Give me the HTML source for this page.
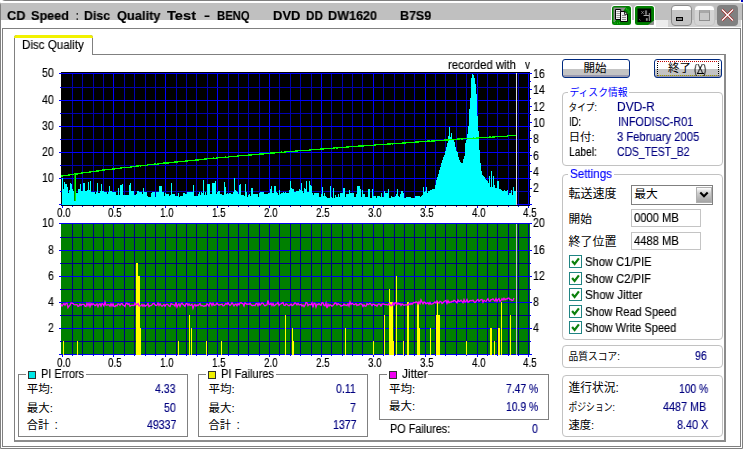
<!DOCTYPE html>
<html lang="ja"><head><meta charset="utf-8"><title>CD Speed : Disc Quality Test</title>
<style>
html,body{margin:0;padding:0;background:#fff;}
body{width:743px;height:449px;position:relative;overflow:hidden;font-family:"Liberation Sans",sans-serif;font-size:12px;color:#000;}
.a{position:absolute;display:block;}
.t{position:absolute;display:block;white-space:pre;transform-origin:0 0;will-change:transform;-webkit-text-stroke:0.15px currentColor;}
.gb{position:absolute;box-sizing:border-box;border:1px solid #c2c2c2;border-radius:4px;}
.sq{position:absolute;box-sizing:border-box;border:1px solid #808080;}
.cap{position:absolute;background:#fff;height:3px;}
.btn{position:absolute;box-sizing:border-box;border:1px solid #002a80;border-radius:3px;background:linear-gradient(#fff 0,#fff 55%,#c4c4c4 55%,#c4c4c4 88%,#9a9ab0 88%);}
.ed{position:absolute;box-sizing:border-box;border:1px solid #c4c4c4;background:#fff;}
.cb{position:absolute;box-sizing:border-box;width:13px;height:13px;border:1px solid #208484;background:#fff;}
.key{position:absolute;box-sizing:border-box;width:8px;height:8px;border:1px solid #303030;}
</style></head>
<body>
<div class="a" style="left:0;top:0;width:743px;height:449px;box-sizing:border-box;border:1px solid #808080;border-radius:5px 5px 0 0;"></div>
<div class="a" style="left:1px;top:3px;width:741px;height:17px;background:#c0c0c0;"></div>
<div class="a" style="left:1px;top:1px;width:741px;height:2px;background:#fff;"></div>
<div class="a" style="left:741px;top:0;width:2px;height:2px;background:#0000c0;"></div>
<div class="sq" style="left:2px;top:28px;width:739px;height:419px;"></div>
<div class="a" style="left:656px;top:20px;width:12px;height:7px;background:#ececec;"></div>
<div class="a" style="left:668px;top:20px;width:73px;height:7px;background:#d2d2d2;"></div>
<svg class="a" style="left:611px;top:5px" width="21" height="21" viewBox="0 0 21 21"><rect x="0" y="0" width="21" height="21" rx="3.5" fill="#fff"/><rect x="1" y="1" width="19" height="19" rx="2.5" fill="#008000"/><path d="M2.5 2.5H15L3.5 17H2.5z" fill="#8c8c8c"/><path d="M4.5 4.5h5.2v10H4.5z" fill="#f4f4f4" stroke="#000" stroke-width="1"/><path d="M5.5 6.5h3.5M5.5 8.5h3.5M5.5 10.5h3.5M5.5 12.5h3.5" stroke="#9a9a9a" stroke-width="1"/><path d="M9.5 6.5h4.4l2.6 2.6v7.4h-7z" fill="#ececec" stroke="#000" stroke-width="1"/><path d="M11 10.5h4M11 12.5h4M11 14.5h4" stroke="#8a8a8a" stroke-width="1"/><path d="M13.5 6.8v2.6h2.6" fill="none" stroke="#000" stroke-width="0.8"/><path d="M2.5 15.5h1M3.5 18h1M6 18.2h1M8 17.8h1M16.5 5h1M17.5 7h1M15 4h1" stroke="#20e020" stroke-width="1"/></svg>
<svg class="a" style="left:634px;top:5px" width="21" height="21" viewBox="0 0 21 21"><rect x="0" y="0" width="21" height="21" rx="3.5" fill="#fff"/><rect x="1" y="1" width="19" height="19" rx="2.5" fill="#008000"/><rect x="3.5" y="3.5" width="13.7" height="13.6" fill="#000"/><path d="M14 20L20 15.5V18.5Q20 20 18.5 20z" fill="#909090"/><path d="M7.4 6.2l2.2 2.6M9.6 6.2L7.4 8.8" stroke="#8a8a8a" stroke-width="0.9"/><path d="M11.4 5.4v4.4M12.6 5.4v4.4" stroke="#9c9c9c" stroke-width="0.8"/><path d="M9.6 10.5h5.6" stroke="#a8a8a8" stroke-width="1"/><path d="M15.3 8v8" stroke="#a0a0a0" stroke-width="1"/><rect x="11.9" y="13.2" width="1.8" height="2.6" fill="#8c8c8c"/><path d="M5 14.2l1.6 1.3" stroke="#707070" stroke-width="0.8"/></svg>
<div class="a" style="left:671px;top:5px;width:21px;height:21px;box-sizing:border-box;border:1px solid #8c8c8c;border-radius:4px;background:linear-gradient(#fff 0,#fff 22%,#c4c4c4 22%);"></div>
<div class="a" style="left:676px;top:17px;width:7px;height:4px;box-sizing:border-box;background:#808080;border:1px solid #000;"></div>
<div class="a" style="left:694px;top:5px;width:21px;height:21px;box-sizing:border-box;border:1px solid #c4c4c4;border-radius:4px;background:linear-gradient(#fff 0,#fff 22%,#d4d4d4 22%);"></div>
<div class="a" style="left:699px;top:10px;width:11px;height:11px;box-sizing:border-box;border:1px solid #909090;border-top:3px solid #a8a8a8;background:#c8c8c8;"></div>
<div class="a" style="left:717px;top:5px;width:21px;height:21px;border-radius:4px;background:#808080;"></div>
<svg class="a" style="left:717px;top:5px" width="21" height="21" viewBox="0 0 21 21"><path d="M5 4.5L16 15.5M16 4.5L5 15.5" stroke="#a02020" stroke-width="2.5"/><path d="M5 4.5L16 15.5M16 4.5L5 15.5" stroke="#fff" stroke-width="1.4"/></svg>
<div class="a" style="left:14px;top:54px;width:712px;height:388px;box-sizing:border-box;border:1px solid #808080;border-right:2px solid #8c8c8c;border-bottom:2px solid #8c8c8c;"></div>
<div class="a" style="left:14px;top:35px;width:79px;height:20px;box-sizing:border-box;border:1px solid #808080;border-bottom:none;border-radius:3px 3px 0 0;background:#fff;"></div>
<div class="a" style="left:14px;top:35px;width:79px;height:3px;border-radius:3px 3px 0 0;background:#f2f200;"></div>
<div class="btn" style="left:562px;top:59px;width:68px;height:19px;"></div>
<div class="btn" style="left:654px;top:59px;width:68px;height:19px;"></div>
<div class="a" style="left:657px;top:61px;width:62px;height:15px;box-sizing:border-box;border:1px dotted #000;border-top-color:#c00000;border-bottom-color:#a0a000;"></div>
<div class="a" style="left:697px;top:73px;width:7px;height:1px;background:#000;"></div>
<div class="gb" style="left:562px;top:92px;width:161px;height:74px;"></div><div class="cap" style="left:568px;top:91px;width:61px;"></div>
<div class="gb" style="left:562px;top:174px;width:161px;height:166px;"></div><div class="cap" style="left:568px;top:173px;width:46px;"></div>
<div class="gb" style="left:562px;top:345px;width:161px;height:23px;"></div>
<div class="gb" style="left:562px;top:375px;width:161px;height:62px;"></div>
<div class="a" style="left:631px;top:185px;width:82px;height:20px;box-sizing:border-box;border:1px solid #808080;background:#fff;"></div>
<div class="a" style="left:696px;top:187px;width:16px;height:16px;box-sizing:border-box;background:linear-gradient(#fff,#cfcfcf 35%,#a4a4a4);border:1px solid #b0b0b0;"></div>
<svg class="a" style="left:696px;top:187px" width="16" height="16" viewBox="0 0 16 16"><path d="M4.3 5.6l3.7 3.7 3.7-3.7" fill="none" stroke="#000" stroke-width="2.1"/></svg>
<div class="ed" style="left:631px;top:209px;width:70px;height:18px;"></div>
<div class="ed" style="left:631px;top:232px;width:70px;height:18px;"></div>
<div class="cb" style="left:569px;top:255px;"></div>
<svg class="a" style="left:569px;top:255px" width="13" height="13" viewBox="0 0 13 13"><path d="M3.1 6L5.6 8.9L9.9 3.3" fill="none" stroke="#0c800c" stroke-width="2.2"/></svg>
<div class="cb" style="left:569px;top:272px;"></div>
<svg class="a" style="left:569px;top:272px" width="13" height="13" viewBox="0 0 13 13"><path d="M3.1 6L5.6 8.9L9.9 3.3" fill="none" stroke="#0c800c" stroke-width="2.2"/></svg>
<div class="cb" style="left:569px;top:288px;"></div>
<svg class="a" style="left:569px;top:288px" width="13" height="13" viewBox="0 0 13 13"><path d="M3.1 6L5.6 8.9L9.9 3.3" fill="none" stroke="#0c800c" stroke-width="2.2"/></svg>
<div class="cb" style="left:569px;top:305px;"></div>
<svg class="a" style="left:569px;top:305px" width="13" height="13" viewBox="0 0 13 13"><path d="M3.1 6L5.6 8.9L9.9 3.3" fill="none" stroke="#0c800c" stroke-width="2.2"/></svg>
<div class="cb" style="left:569px;top:321px;"></div>
<svg class="a" style="left:569px;top:321px" width="13" height="13" viewBox="0 0 13 13"><path d="M3.1 6L5.6 8.9L9.9 3.3" fill="none" stroke="#0c800c" stroke-width="2.2"/></svg>
<div class="sq" style="left:18px;top:374px;width:170px;height:63px;"></div><div class="cap" style="left:26px;top:373px;width:60px;"></div>
<div class="sq" style="left:198px;top:374px;width:170px;height:63px;"></div><div class="cap" style="left:206px;top:373px;width:70px;"></div>
<div class="sq" style="left:379px;top:374px;width:170px;height:46px;"></div><div class="cap" style="left:387px;top:373px;width:41px;"></div>
<div class="key" style="left:28px;top:371px;background:#00e8e8;"></div>
<div class="key" style="left:208px;top:371px;background:#f0f000;"></div>
<div class="key" style="left:389px;top:371px;background:#f000f0;"></div>
<svg class="a" style="left:0;top:0" width="743" height="449" viewBox="0 0 743 449" shape-rendering="crispEdges">
<rect x="61" y="72" width="469" height="134" fill="#000"/>
<rect x="61" y="223" width="469" height="132" fill="#008000"/>
<rect x="72" y="73" width="1" height="132" fill="#0000b0"/>
<rect x="82" y="73" width="1" height="132" fill="#0000b0"/>
<rect x="93" y="73" width="1" height="132" fill="#0000b0"/>
<rect x="103" y="73" width="1" height="132" fill="#0000b0"/>
<rect x="113" y="73" width="1" height="132" fill="#0000ff"/>
<rect x="124" y="73" width="1" height="132" fill="#0000b0"/>
<rect x="134" y="73" width="1" height="132" fill="#0000b0"/>
<rect x="145" y="73" width="1" height="132" fill="#0000b0"/>
<rect x="155" y="73" width="1" height="132" fill="#0000b0"/>
<rect x="165" y="73" width="1" height="132" fill="#0000ff"/>
<rect x="176" y="73" width="1" height="132" fill="#0000b0"/>
<rect x="186" y="73" width="1" height="132" fill="#0000b0"/>
<rect x="196" y="73" width="1" height="132" fill="#0000b0"/>
<rect x="207" y="73" width="1" height="132" fill="#0000b0"/>
<rect x="217" y="73" width="1" height="132" fill="#0000ff"/>
<rect x="228" y="73" width="1" height="132" fill="#0000b0"/>
<rect x="238" y="73" width="1" height="132" fill="#0000b0"/>
<rect x="248" y="73" width="1" height="132" fill="#0000b0"/>
<rect x="259" y="73" width="1" height="132" fill="#0000b0"/>
<rect x="269" y="73" width="1" height="132" fill="#0000ff"/>
<rect x="279" y="73" width="1" height="132" fill="#0000b0"/>
<rect x="290" y="73" width="1" height="132" fill="#0000b0"/>
<rect x="300" y="73" width="1" height="132" fill="#0000b0"/>
<rect x="311" y="73" width="1" height="132" fill="#0000b0"/>
<rect x="321" y="73" width="1" height="132" fill="#0000ff"/>
<rect x="331" y="73" width="1" height="132" fill="#0000b0"/>
<rect x="342" y="73" width="1" height="132" fill="#0000b0"/>
<rect x="352" y="73" width="1" height="132" fill="#0000b0"/>
<rect x="362" y="73" width="1" height="132" fill="#0000b0"/>
<rect x="373" y="73" width="1" height="132" fill="#0000ff"/>
<rect x="383" y="73" width="1" height="132" fill="#0000b0"/>
<rect x="394" y="73" width="1" height="132" fill="#0000b0"/>
<rect x="404" y="73" width="1" height="132" fill="#0000b0"/>
<rect x="414" y="73" width="1" height="132" fill="#0000b0"/>
<rect x="425" y="73" width="1" height="132" fill="#0000ff"/>
<rect x="435" y="73" width="1" height="132" fill="#0000b0"/>
<rect x="445" y="73" width="1" height="132" fill="#0000b0"/>
<rect x="456" y="73" width="1" height="132" fill="#0000b0"/>
<rect x="466" y="73" width="1" height="132" fill="#0000b0"/>
<rect x="477" y="73" width="1" height="132" fill="#0000ff"/>
<rect x="487" y="73" width="1" height="132" fill="#0000b0"/>
<rect x="497" y="73" width="1" height="132" fill="#0000b0"/>
<rect x="508" y="73" width="1" height="132" fill="#0000b0"/>
<rect x="518" y="73" width="1" height="132" fill="#0000b0"/>
<rect x="528" y="73" width="1" height="132" fill="#0000ff"/>
<rect x="61" y="73" width="469" height="1" fill="#0000ff"/>
<rect x="61" y="87" width="469" height="1" fill="#0000b0"/>
<rect x="61" y="100" width="469" height="1" fill="#0000ff"/>
<rect x="61" y="113" width="469" height="1" fill="#0000b0"/>
<rect x="61" y="126" width="469" height="1" fill="#0000ff"/>
<rect x="61" y="139" width="469" height="1" fill="#0000b0"/>
<rect x="61" y="152" width="469" height="1" fill="#0000ff"/>
<rect x="61" y="165" width="469" height="1" fill="#0000b0"/>
<rect x="61" y="178" width="469" height="1" fill="#0000ff"/>
<rect x="61" y="191" width="469" height="1" fill="#0000b0"/>
<rect x="61" y="204" width="469" height="1" fill="#0000ff"/>
<path d="M62 205V178H63V189H64V182H65V184H66V184H67V187H68V193H69V190H70V183H71V184H72V189H73V191H74V192H75V192H76V193H77V193H78V189H79V189H80V184H81V191H82V191H83V183H84V183H85V191H86V191H87V190H88V182H89V190H90V181H91V192H92V192H93V192H94V192H95V194H96V192H97V183H98V193H99V193H100V191H101V184H102V191H103V191H104V192H105V192H106V192H107V194H108V192H109V186H110V191H111V191H112V192H113V192H114V192H115V192H116V195H117V195H118V188H119V195H120V185H121V185H122V184H123V195H124V195H125V195H126V195H127V195H128V195H129V185H130V183H131V191H132V191H133V191H134V195H135V195H136V194H137V191H138V191H139V192H140V192H141V192H142V194H143V188H144V192H145V192H146V192H147V196H148V197H149V197H150V197H151V193H152V192H153V192H154V192H155V197H156V192H157V192H158V192H159V186H160V186H161V186H162V192H163V192H164V196H165V193H166V194H167V194H168V194H169V196H170V195H171V183H172V194H173V194H174V194H175V196H176V196H177V196H178V193H179V197H180V196H181V196H182V196H183V193H184V193H185V194H186V194H187V192H188V192H189V192H190V192H191V192H192V192H193V185H194V196H195V196H196V196H197V196H198V194H199V192H200V195H201V192H202V193H203V180H204V195H205V192H206V195H207V184H208V184H209V184H210V194H211V194H212V183H213V183H214V183H215V181H216V194H217V192H218V191H219V191H220V194H221V194H222V195H223V195H224V182H225V187H226V194H227V193H228V194H229V193H230V193H231V194H232V194H233V192H234V178H235V190H236V191H237V192H238V194H239V185H240V184H241V195H242V195H243V195H244V196H245V184H246V192H247V197H248V195H249V194H250V196H251V188H252V188H253V194H254V194H255V194H256V194H257V194H258V197H259V193H260V192H261V192H262V192H263V192H264V194H265V194H266V194H267V194H268V193H269V193H270V189H271V186H272V193H273V193H274V186H275V186H276V192H277V193H278V195H279V190H280V194H281V193H282V193H283V192H284V193H285V192H286V193H287V193H288V193H289V190H290V181H291V188H292V189H293V189H294V192H295V192H296V191H297V191H298V191H299V189H300V190H301V183H302V191H303V193H304V188H305V189H306V181H307V192H308V192H309V181H310V185H311V186H312V193H313V195H314V193H315V193H316V193H317V193H318V193H319V197H320V197H321V194H322V187H323V196H324V193H325V196H326V197H327V198H328V198H329V198H330V186H331V197H332V198H333V188H334V198H335V195H336V197H337V197H338V194H339V197H340V193H341V193H342V193H343V188H344V188H345V197H346V194H347V194H348V194H349V190H350V193H351V193H352V193H353V193H354V197H355V197H356V194H357V186H358V186H359V186H360V189H361V197H362V190H363V194H364V194H365V197H366V197H367V197H368V189H369V189H370V198H371V198H372V189H373V196H374V196H375V196H376V198H377V196H378V196H379V196H380V197H381V193H382V197H383V197H384V191H385V193H386V193H387V193H388V189H389V198H390V198H391V196H392V197H393V197H394V197H395V196H396V194H397V189H398V196H399V197H400V194H401V191H402V191H403V193H404V198H405V198H406V197H407V197H408V197H409V197H410V197H411V198H412V198H413V198H414V198H415V196H416V196H417V196H418V196H419V196H420V197H421V196H422V195H423V187H424V192H425V191H426V187H427V193H428V191H429V191H430V190H431V190H432V189H433V189H434V189H435V185H436V180H437V177H438V174H439V170H440V167H441V163H442V160H443V157H444V155H445V151H446V147H447V143H448V136H449V127H450V137H451V133H452V139H453V140H454V142H455V147H456V151H457V152H458V157H459V160H460V162H461V163H462V163H463V159H464V156H465V143H466V140H467V134H468V126H469V109H470V98H471V78H472V74H473V75H474V78H475V84H476V94H477V116H478V131H479V150H480V163H481V171H482V175H483V176H484V177H485V179H486V180H487V181H488V183H489V176H490V187H491V171H492V187H493V176H494V185H495V188H496V188H497V181H498V181H499V189H500V189H501V190H502V191H503V191H504V190H505V191H506V191H507V190H508V195H509V193H510V193H511V190H512V195H513V187H514V191H515V191H516V205Z" fill="#00ffff"/>
<rect x="61" y="205" width="469" height="1" fill="#000018"/>
<rect x="516" y="73" width="1" height="132" fill="#d8d8d8"/>
<rect x="59" y="73" width="2" height="1" fill="#0000ff"/>
<rect x="60" y="87" width="1" height="1" fill="#0000ff"/>
<rect x="59" y="100" width="2" height="1" fill="#0000ff"/>
<rect x="60" y="113" width="1" height="1" fill="#0000ff"/>
<rect x="59" y="126" width="2" height="1" fill="#0000ff"/>
<rect x="60" y="139" width="1" height="1" fill="#0000ff"/>
<rect x="59" y="152" width="2" height="1" fill="#0000ff"/>
<rect x="60" y="165" width="1" height="1" fill="#0000ff"/>
<rect x="59" y="178" width="2" height="1" fill="#0000ff"/>
<rect x="60" y="191" width="1" height="1" fill="#0000ff"/>
<rect x="59" y="204" width="2" height="1" fill="#0000ff"/>
<rect x="530" y="204" width="2" height="1" fill="#0000ff"/>
<rect x="530" y="196" width="1" height="1" fill="#0000ff"/>
<rect x="530" y="188" width="2" height="1" fill="#0000ff"/>
<rect x="530" y="179" width="1" height="1" fill="#0000ff"/>
<rect x="530" y="171" width="2" height="1" fill="#0000ff"/>
<rect x="530" y="163" width="1" height="1" fill="#0000ff"/>
<rect x="530" y="155" width="2" height="1" fill="#0000ff"/>
<rect x="530" y="147" width="1" height="1" fill="#0000ff"/>
<rect x="530" y="138" width="2" height="1" fill="#0000ff"/>
<rect x="530" y="130" width="1" height="1" fill="#0000ff"/>
<rect x="530" y="122" width="2" height="1" fill="#0000ff"/>
<rect x="530" y="114" width="1" height="1" fill="#0000ff"/>
<rect x="530" y="106" width="2" height="1" fill="#0000ff"/>
<rect x="530" y="98" width="1" height="1" fill="#0000ff"/>
<rect x="530" y="89" width="2" height="1" fill="#0000ff"/>
<rect x="530" y="81" width="1" height="1" fill="#0000ff"/>
<rect x="530" y="73" width="2" height="1" fill="#0000ff"/>
<rect x="62" y="206" width="1" height="2" fill="#0000ff"/>
<rect x="72" y="206" width="1" height="1" fill="#0000ff"/>
<rect x="82" y="206" width="1" height="1" fill="#0000ff"/>
<rect x="93" y="206" width="1" height="1" fill="#0000ff"/>
<rect x="103" y="206" width="1" height="1" fill="#0000ff"/>
<rect x="113" y="206" width="1" height="2" fill="#0000ff"/>
<rect x="124" y="206" width="1" height="1" fill="#0000ff"/>
<rect x="134" y="206" width="1" height="1" fill="#0000ff"/>
<rect x="145" y="206" width="1" height="1" fill="#0000ff"/>
<rect x="155" y="206" width="1" height="1" fill="#0000ff"/>
<rect x="165" y="206" width="1" height="2" fill="#0000ff"/>
<rect x="176" y="206" width="1" height="1" fill="#0000ff"/>
<rect x="186" y="206" width="1" height="1" fill="#0000ff"/>
<rect x="196" y="206" width="1" height="1" fill="#0000ff"/>
<rect x="207" y="206" width="1" height="1" fill="#0000ff"/>
<rect x="217" y="206" width="1" height="2" fill="#0000ff"/>
<rect x="228" y="206" width="1" height="1" fill="#0000ff"/>
<rect x="238" y="206" width="1" height="1" fill="#0000ff"/>
<rect x="248" y="206" width="1" height="1" fill="#0000ff"/>
<rect x="259" y="206" width="1" height="1" fill="#0000ff"/>
<rect x="269" y="206" width="1" height="2" fill="#0000ff"/>
<rect x="279" y="206" width="1" height="1" fill="#0000ff"/>
<rect x="290" y="206" width="1" height="1" fill="#0000ff"/>
<rect x="300" y="206" width="1" height="1" fill="#0000ff"/>
<rect x="311" y="206" width="1" height="1" fill="#0000ff"/>
<rect x="321" y="206" width="1" height="2" fill="#0000ff"/>
<rect x="331" y="206" width="1" height="1" fill="#0000ff"/>
<rect x="342" y="206" width="1" height="1" fill="#0000ff"/>
<rect x="352" y="206" width="1" height="1" fill="#0000ff"/>
<rect x="362" y="206" width="1" height="1" fill="#0000ff"/>
<rect x="373" y="206" width="1" height="2" fill="#0000ff"/>
<rect x="383" y="206" width="1" height="1" fill="#0000ff"/>
<rect x="394" y="206" width="1" height="1" fill="#0000ff"/>
<rect x="404" y="206" width="1" height="1" fill="#0000ff"/>
<rect x="414" y="206" width="1" height="1" fill="#0000ff"/>
<rect x="425" y="206" width="1" height="2" fill="#0000ff"/>
<rect x="435" y="206" width="1" height="1" fill="#0000ff"/>
<rect x="445" y="206" width="1" height="1" fill="#0000ff"/>
<rect x="456" y="206" width="1" height="1" fill="#0000ff"/>
<rect x="466" y="206" width="1" height="1" fill="#0000ff"/>
<rect x="477" y="206" width="1" height="2" fill="#0000ff"/>
<rect x="487" y="206" width="1" height="1" fill="#0000ff"/>
<rect x="497" y="206" width="1" height="1" fill="#0000ff"/>
<rect x="508" y="206" width="1" height="1" fill="#0000ff"/>
<rect x="518" y="206" width="1" height="1" fill="#0000ff"/>
<rect x="528" y="206" width="1" height="2" fill="#0000ff"/>
<rect x="72" y="223" width="1" height="132" fill="#000084"/>
<rect x="82" y="223" width="1" height="132" fill="#000084"/>
<rect x="93" y="223" width="1" height="132" fill="#000084"/>
<rect x="103" y="223" width="1" height="132" fill="#000084"/>
<rect x="113" y="223" width="1" height="132" fill="#0000a0"/>
<rect x="124" y="223" width="1" height="132" fill="#000084"/>
<rect x="134" y="223" width="1" height="132" fill="#000084"/>
<rect x="145" y="223" width="1" height="132" fill="#000084"/>
<rect x="155" y="223" width="1" height="132" fill="#000084"/>
<rect x="165" y="223" width="1" height="132" fill="#0000a0"/>
<rect x="176" y="223" width="1" height="132" fill="#000084"/>
<rect x="186" y="223" width="1" height="132" fill="#000084"/>
<rect x="196" y="223" width="1" height="132" fill="#000084"/>
<rect x="207" y="223" width="1" height="132" fill="#000084"/>
<rect x="217" y="223" width="1" height="132" fill="#0000a0"/>
<rect x="228" y="223" width="1" height="132" fill="#000084"/>
<rect x="238" y="223" width="1" height="132" fill="#000084"/>
<rect x="248" y="223" width="1" height="132" fill="#000084"/>
<rect x="259" y="223" width="1" height="132" fill="#000084"/>
<rect x="269" y="223" width="1" height="132" fill="#0000a0"/>
<rect x="279" y="223" width="1" height="132" fill="#000084"/>
<rect x="290" y="223" width="1" height="132" fill="#000084"/>
<rect x="300" y="223" width="1" height="132" fill="#000084"/>
<rect x="311" y="223" width="1" height="132" fill="#000084"/>
<rect x="321" y="223" width="1" height="132" fill="#0000a0"/>
<rect x="331" y="223" width="1" height="132" fill="#000084"/>
<rect x="342" y="223" width="1" height="132" fill="#000084"/>
<rect x="352" y="223" width="1" height="132" fill="#000084"/>
<rect x="362" y="223" width="1" height="132" fill="#000084"/>
<rect x="373" y="223" width="1" height="132" fill="#0000a0"/>
<rect x="383" y="223" width="1" height="132" fill="#000084"/>
<rect x="394" y="223" width="1" height="132" fill="#000084"/>
<rect x="404" y="223" width="1" height="132" fill="#000084"/>
<rect x="414" y="223" width="1" height="132" fill="#000084"/>
<rect x="425" y="223" width="1" height="132" fill="#0000a0"/>
<rect x="435" y="223" width="1" height="132" fill="#000084"/>
<rect x="445" y="223" width="1" height="132" fill="#000084"/>
<rect x="456" y="223" width="1" height="132" fill="#000084"/>
<rect x="466" y="223" width="1" height="132" fill="#000084"/>
<rect x="477" y="223" width="1" height="132" fill="#0000a0"/>
<rect x="487" y="223" width="1" height="132" fill="#000084"/>
<rect x="497" y="223" width="1" height="132" fill="#000084"/>
<rect x="508" y="223" width="1" height="132" fill="#000084"/>
<rect x="518" y="223" width="1" height="132" fill="#000084"/>
<rect x="528" y="223" width="1" height="132" fill="#0000a0"/>
<rect x="61" y="223" width="469" height="1" fill="#0000f0"/>
<rect x="61" y="237" width="469" height="1" fill="#000084"/>
<rect x="61" y="250" width="469" height="1" fill="#0000f0"/>
<rect x="61" y="263" width="469" height="1" fill="#000084"/>
<rect x="61" y="276" width="469" height="1" fill="#0000f0"/>
<rect x="61" y="289" width="469" height="1" fill="#000084"/>
<rect x="61" y="302" width="469" height="1" fill="#0000f0"/>
<rect x="61" y="315" width="469" height="1" fill="#000084"/>
<rect x="61" y="328" width="469" height="1" fill="#0000f0"/>
<rect x="61" y="341" width="469" height="1" fill="#000084"/>
<rect x="61" y="354" width="469" height="1" fill="#0000f0"/>
<rect x="59" y="223" width="2" height="1" fill="#0000ff"/>
<rect x="530" y="223" width="2" height="1" fill="#0000ff"/>
<rect x="60" y="237" width="1" height="1" fill="#0000ff"/>
<rect x="530" y="237" width="1" height="1" fill="#0000ff"/>
<rect x="59" y="250" width="2" height="1" fill="#0000ff"/>
<rect x="530" y="250" width="2" height="1" fill="#0000ff"/>
<rect x="60" y="263" width="1" height="1" fill="#0000ff"/>
<rect x="530" y="263" width="1" height="1" fill="#0000ff"/>
<rect x="59" y="276" width="2" height="1" fill="#0000ff"/>
<rect x="530" y="276" width="2" height="1" fill="#0000ff"/>
<rect x="60" y="289" width="1" height="1" fill="#0000ff"/>
<rect x="530" y="289" width="1" height="1" fill="#0000ff"/>
<rect x="59" y="302" width="2" height="1" fill="#0000ff"/>
<rect x="530" y="302" width="2" height="1" fill="#0000ff"/>
<rect x="60" y="315" width="1" height="1" fill="#0000ff"/>
<rect x="530" y="315" width="1" height="1" fill="#0000ff"/>
<rect x="59" y="328" width="2" height="1" fill="#0000ff"/>
<rect x="530" y="328" width="2" height="1" fill="#0000ff"/>
<rect x="60" y="341" width="1" height="1" fill="#0000ff"/>
<rect x="530" y="341" width="1" height="1" fill="#0000ff"/>
<rect x="59" y="354" width="2" height="1" fill="#0000ff"/>
<rect x="530" y="354" width="2" height="1" fill="#0000ff"/>
<rect x="62" y="355" width="1" height="2" fill="#0000ff"/>
<rect x="72" y="355" width="1" height="1" fill="#0000ff"/>
<rect x="82" y="355" width="1" height="1" fill="#0000ff"/>
<rect x="93" y="355" width="1" height="1" fill="#0000ff"/>
<rect x="103" y="355" width="1" height="1" fill="#0000ff"/>
<rect x="113" y="355" width="1" height="2" fill="#0000ff"/>
<rect x="124" y="355" width="1" height="1" fill="#0000ff"/>
<rect x="134" y="355" width="1" height="1" fill="#0000ff"/>
<rect x="145" y="355" width="1" height="1" fill="#0000ff"/>
<rect x="155" y="355" width="1" height="1" fill="#0000ff"/>
<rect x="165" y="355" width="1" height="2" fill="#0000ff"/>
<rect x="176" y="355" width="1" height="1" fill="#0000ff"/>
<rect x="186" y="355" width="1" height="1" fill="#0000ff"/>
<rect x="196" y="355" width="1" height="1" fill="#0000ff"/>
<rect x="207" y="355" width="1" height="1" fill="#0000ff"/>
<rect x="217" y="355" width="1" height="2" fill="#0000ff"/>
<rect x="228" y="355" width="1" height="1" fill="#0000ff"/>
<rect x="238" y="355" width="1" height="1" fill="#0000ff"/>
<rect x="248" y="355" width="1" height="1" fill="#0000ff"/>
<rect x="259" y="355" width="1" height="1" fill="#0000ff"/>
<rect x="269" y="355" width="1" height="2" fill="#0000ff"/>
<rect x="279" y="355" width="1" height="1" fill="#0000ff"/>
<rect x="290" y="355" width="1" height="1" fill="#0000ff"/>
<rect x="300" y="355" width="1" height="1" fill="#0000ff"/>
<rect x="311" y="355" width="1" height="1" fill="#0000ff"/>
<rect x="321" y="355" width="1" height="2" fill="#0000ff"/>
<rect x="331" y="355" width="1" height="1" fill="#0000ff"/>
<rect x="342" y="355" width="1" height="1" fill="#0000ff"/>
<rect x="352" y="355" width="1" height="1" fill="#0000ff"/>
<rect x="362" y="355" width="1" height="1" fill="#0000ff"/>
<rect x="373" y="355" width="1" height="2" fill="#0000ff"/>
<rect x="383" y="355" width="1" height="1" fill="#0000ff"/>
<rect x="394" y="355" width="1" height="1" fill="#0000ff"/>
<rect x="404" y="355" width="1" height="1" fill="#0000ff"/>
<rect x="414" y="355" width="1" height="1" fill="#0000ff"/>
<rect x="425" y="355" width="1" height="2" fill="#0000ff"/>
<rect x="435" y="355" width="1" height="1" fill="#0000ff"/>
<rect x="445" y="355" width="1" height="1" fill="#0000ff"/>
<rect x="456" y="355" width="1" height="1" fill="#0000ff"/>
<rect x="466" y="355" width="1" height="1" fill="#0000ff"/>
<rect x="477" y="355" width="1" height="2" fill="#0000ff"/>
<rect x="487" y="355" width="1" height="1" fill="#0000ff"/>
<rect x="497" y="355" width="1" height="1" fill="#0000ff"/>
<rect x="508" y="355" width="1" height="1" fill="#0000ff"/>
<rect x="518" y="355" width="1" height="1" fill="#0000ff"/>
<rect x="528" y="355" width="1" height="2" fill="#0000ff"/>
<rect x="63" y="341" width="1" height="14" fill="#ffff00"/>
<rect x="77" y="341" width="1" height="14" fill="#ffff00"/>
<rect x="136" y="263" width="2" height="92" fill="#ffff00"/>
<rect x="138" y="276" width="2" height="79" fill="#ffff00"/>
<rect x="140" y="328" width="1" height="27" fill="#ffff00"/>
<rect x="178" y="341" width="1" height="14" fill="#ffff00"/>
<rect x="189" y="315" width="1" height="40" fill="#ffff00"/>
<rect x="191" y="328" width="1" height="27" fill="#ffff00"/>
<rect x="206" y="341" width="1" height="14" fill="#ffff00"/>
<rect x="221" y="341" width="1" height="14" fill="#ffff00"/>
<rect x="285" y="315" width="1" height="40" fill="#ffff00"/>
<rect x="292" y="328" width="1" height="27" fill="#ffff00"/>
<rect x="293" y="341" width="1" height="14" fill="#ffff00"/>
<rect x="345" y="328" width="1" height="27" fill="#ffff00"/>
<rect x="373" y="341" width="1" height="14" fill="#ffff00"/>
<rect x="384" y="315" width="1" height="40" fill="#ffff00"/>
<rect x="389" y="289" width="1" height="66" fill="#ffff00"/>
<rect x="390" y="302" width="3" height="53" fill="#ffff00"/>
<rect x="393" y="341" width="1" height="14" fill="#ffff00"/>
<rect x="396" y="276" width="1" height="79" fill="#ffff00"/>
<rect x="403" y="341" width="1" height="14" fill="#ffff00"/>
<rect x="407" y="302" width="2" height="53" fill="#ffff00"/>
<rect x="417" y="302" width="2" height="53" fill="#ffff00"/>
<rect x="419" y="328" width="1" height="27" fill="#ffff00"/>
<rect x="430" y="328" width="1" height="27" fill="#ffff00"/>
<rect x="436" y="315" width="1" height="40" fill="#ffff00"/>
<rect x="437" y="302" width="1" height="53" fill="#ffff00"/>
<rect x="438" y="315" width="2" height="40" fill="#ffff00"/>
<rect x="466" y="341" width="1" height="14" fill="#ffff00"/>
<rect x="490" y="328" width="2" height="27" fill="#ffff00"/>
<rect x="494" y="341" width="1" height="14" fill="#ffff00"/>
<rect x="498" y="328" width="2" height="27" fill="#ffff00"/>
<rect x="501" y="302" width="1" height="53" fill="#ffff00"/>
<rect x="510" y="315" width="1" height="40" fill="#ffff00"/>
<rect x="516" y="224" width="1" height="131" fill="#c0c0c0"/>
<path d="M61 175.9 L62 176.1 L63 175.6 L64 175.7 L65 175.6 L66 175.3 L67 175.4 L68 175.1 L69 175.0 L70 175.0 L71 174.4 L72 174.7 L73 174.4 L74 174.1 L75 174.2 L76 173.8 L77 174.0 L78 173.7 L79 173.4 L80 173.5 L81 173.2 L82 172.9 L83 173.0 L84 172.6 L85 172.8 L86 172.4 L87 172.4 L88 172.5 L89 172.2 L90 172.1 L91 171.8 L92 171.5 L93 171.3 L94 171.3 L95 171.4 L96 171.2 L97 171.1 L98 171.1 L99 170.6 L100 170.5 L101 170.6 L102 170.2 L103 170.0 L104 170.1 L105 169.8 L106 169.8 L107 169.6 L108 169.7 L109 169.6 L110 169.3 L111 169.3 L112 169.1 L113 168.9 L114 169.1 L115 168.7 L116 168.5 L117 168.3 L118 168.5 L119 168.5 L120 168.3 L121 168.0 L122 167.8 L123 167.6 L124 167.8 L125 167.6 L126 167.4 L127 167.4 L128 167.2 L129 167.3 L130 167.1 L131 166.8 L132 167.0 L133 166.4 L134 166.6 L135 166.4 L136 166.2 L137 166.0 L138 166.2 L139 165.7 L140 165.9 L141 166.0 L142 165.5 L143 165.4 L144 165.5 L145 165.3 L146 165.3 L147 165.2 L148 164.8 L149 164.8 L150 164.7 L151 164.4 L152 164.7 L153 164.6 L154 164.4 L155 164.0 L156 164.3 L157 164.1 L158 163.9 L159 163.9 L160 163.7 L161 163.4 L162 163.3 L163 163.2 L164 163.0 L165 163.1 L166 163.2 L167 163.0 L168 163.0 L169 162.8 L170 162.5 L171 162.6 L172 162.4 L173 162.5 L174 162.2 L175 162.0 L176 162.1 L177 162.1 L178 161.7 L179 161.9 L180 161.4 L181 161.4 L182 161.3 L183 161.4 L184 161.4 L185 161.2 L186 160.9 L187 161.1 L188 160.7 L189 160.6 L190 160.8 L191 160.6 L192 160.5 L193 160.4 L194 160.4 L195 160.1 L196 160.2 L197 160.0 L198 160.0 L199 159.7 L200 159.7 L201 159.6 L202 159.3 L203 159.2 L204 159.3 L205 158.9 L206 159.2 L207 158.8 L208 158.6 L209 158.6 L210 158.9 L211 158.5 L212 158.3 L213 158.1 L214 158.1 L215 158.3 L216 158.2 L217 158.1 L218 158.0 L219 157.6 L220 157.8 L221 157.6 L222 157.7 L223 157.6 L224 157.5 L225 157.0 L226 157.3 L227 157.3 L228 157.2 L229 156.7 L230 156.7 L231 156.5 L232 156.4 L233 156.7 L234 156.6 L235 156.4 L236 156.4 L237 156.2 L238 156.0 L239 155.8 L240 155.7 L241 155.9 L242 155.6 L243 155.5 L244 155.5 L245 155.2 L246 155.2 L247 155.2 L248 155.3 L249 155.0 L250 154.9 L251 155.2 L252 154.8 L253 154.9 L254 154.7 L255 154.3 L256 154.4 L257 154.4 L258 154.4 L259 154.1 L260 154.2 L261 154.1 L262 153.8 L263 154.1 L264 153.6 L265 153.9 L266 153.5 L267 153.3 L268 153.3 L269 153.5 L270 153.5 L271 152.9 L272 153.1 L273 153.0 L274 153.1 L275 152.7 L276 152.8 L277 152.6 L278 152.8 L279 152.4 L280 152.7 L281 152.2 L282 152.1 L283 152.3 L284 152.1 L285 151.8 L286 152.0 L287 151.6 L288 151.9 L289 151.8 L290 151.7 L291 151.6 L292 151.4 L293 151.3 L294 151.2 L295 151.4 L296 150.9 L297 151.2 L298 150.7 L299 150.7 L300 150.7 L301 150.9 L302 150.6 L303 150.5 L304 150.7 L305 150.3 L306 150.3 L307 150.2 L308 150.3 L309 150.2 L310 150.1 L311 149.8 L312 149.7 L313 149.6 L314 149.8 L315 149.7 L316 149.6 L317 149.3 L318 149.3 L319 149.4 L320 149.2 L321 148.9 L322 149.0 L323 149.1 L324 148.7 L325 148.6 L326 148.6 L327 148.7 L328 148.7 L329 148.3 L330 148.2 L331 148.2 L332 148.2 L333 148.2 L334 147.9 L335 147.9 L336 147.8 L337 148.1 L338 147.9 L339 147.5 L340 147.9 L341 147.4 L342 147.4 L343 147.6 L344 147.5 L345 147.4 L346 147.1 L347 147.0 L348 147.1 L349 146.8 L350 146.7 L351 146.7 L352 146.5 L353 146.6 L354 146.7 L355 146.6 L356 146.4 L357 146.4 L358 146.3 L359 146.0 L360 146.2 L361 146.0 L362 146.1 L363 146.1 L364 145.8 L365 145.8 L366 145.8 L367 145.6 L368 145.4 L369 145.6 L370 145.6 L371 145.4 L372 145.3 L373 145.3 L374 145.2 L375 145.1 L376 144.9 L377 144.8 L378 144.9 L379 144.5 L380 144.6 L381 144.7 L382 144.6 L383 144.5 L384 144.2 L385 144.2 L386 144.2 L387 144.2 L388 144.0 L389 144.1 L390 144.1 L391 143.7 L392 143.9 L393 143.9 L394 143.6 L395 143.6 L396 143.7 L397 143.2 L398 143.4 L399 143.1 L400 143.4 L401 143.4 L402 143.1 L403 142.8 L404 143.0 L405 142.9 L406 142.9 L407 142.7 L408 142.7 L409 142.7 L410 142.5 L411 142.4 L412 142.6 L413 142.1 L414 142.3 L415 142.1 L416 142.2 L417 141.8 L418 142.2 L419 141.8 L420 141.6 L421 141.6 L422 141.6 L423 141.4 L424 141.5 L425 141.4 L426 141.5 L427 141.2 L428 141.1 L429 141.0 L430 141.2 L431 141.3 L432 141.0 L433 140.8 L434 141.0 L435 140.7 L436 140.6 L437 140.5 L438 140.7 L439 140.7 L440 140.5 L441 140.3 L442 140.3 L443 140.1 L444 140.4 L445 140.0 L446 140.1 L447 140.1 L448 140.0 L449 139.8 L450 139.7 L451 139.7 L452 139.4 L453 139.7 L454 139.4 L455 139.6 L456 139.2 L457 139.2 L458 139.1 L459 139.1 L460 138.9 L461 138.8 L462 139.1 L463 138.8 L464 138.7 L465 138.7 L466 138.7 L467 138.6 L468 138.6 L469 138.6 L470 138.4 L471 138.6 L472 138.5 L473 138.0 L474 138.3 L475 138.3 L476 138.2 L477 137.8 L478 138.1 L479 137.9 L480 137.5 L481 137.5 L482 137.9 L483 137.6 L484 137.4 L485 137.2 L486 137.2 L487 137.2 L488 137.4 L489 137.1 L490 136.9 L491 137.3 L492 137.1 L493 136.8 L494 137.1 L495 136.8 L496 136.9 L497 136.7 L498 136.8 L499 136.7 L500 136.6 L501 136.3 L502 136.4 L503 136.3 L504 136.3 L505 136.1 L506 136.3 L507 136.1 L508 135.8 L509 135.8 L510 135.7 L511 135.8 L512 135.5 L513 135.6 L514 135.4 L515 135.5 L516 135.5" fill="none" stroke="#00ff00" stroke-width="1.3" shape-rendering="crispEdges"/>
<rect x="75" y="174" width="1" height="27" fill="#00ff00"/><rect x="74" y="174" width="1" height="27" fill="#008800"/>
<path d="M61 304.4 L62 306.0 L63 304.6 L64 303.5 L65 305.1 L66 303.3 L67 303.2 L68 307.7 L69 306.2 L70 305.1 L71 303.0 L72 303.2 L73 303.6 L74 304.5 L75 304.8 L76 304.7 L77 304.6 L78 306.4 L79 305.9 L80 304.1 L81 305.4 L82 304.4 L83 304.4 L84 304.5 L85 306.2 L86 306.4 L87 303.3 L88 305.7 L89 303.4 L90 306.4 L91 303.5 L92 304.9 L93 303.7 L94 304.6 L95 305.6 L96 304.9 L97 303.9 L98 306.5 L99 304.2 L100 303.9 L101 306.1 L102 303.5 L103 303.9 L104 305.8 L105 302.1 L106 305.2 L107 305.2 L108 304.7 L109 304.8 L110 306.2 L111 303.7 L112 306.0 L113 303.9 L114 306.4 L115 306.5 L116 305.3 L117 305.9 L118 304.0 L119 304.1 L120 305.3 L121 303.8 L122 303.5 L123 305.1 L124 305.3 L125 306.4 L126 303.3 L127 303.1 L128 304.5 L129 303.7 L130 306.3 L131 305.5 L132 305.2 L133 305.4 L134 305.6 L135 303.3 L136 304.9 L137 304.3 L138 303.5 L139 305.8 L140 305.8 L141 305.9 L142 304.4 L143 306.3 L144 304.7 L145 306.2 L146 305.4 L147 305.2 L148 303.5 L149 306.6 L150 305.7 L151 305.7 L152 304.7 L153 303.5 L154 303.3 L155 304.8 L156 305.6 L157 305.3 L158 303.1 L159 305.5 L160 303.8 L161 305.4 L162 306.2 L163 305.4 L164 304.6 L165 306.3 L166 304.5 L167 304.2 L168 304.8 L169 306.0 L170 306.4 L171 303.7 L172 304.1 L173 304.5 L174 304.8 L175 306.0 L176 302.3 L177 307.1 L178 305.0 L179 304.0 L180 306.3 L181 303.9 L182 303.2 L183 304.6 L184 305.3 L185 306.3 L186 303.7 L187 303.5 L188 305.4 L189 303.9 L190 305.4 L191 305.1 L192 304.3 L193 308.2 L194 305.4 L195 304.5 L196 306.1 L197 304.9 L198 305.7 L199 304.5 L200 303.6 L201 305.7 L202 305.4 L203 306.0 L204 306.2 L205 305.6 L206 306.0 L207 303.8 L208 304.7 L209 306.1 L210 303.1 L211 303.4 L212 305.5 L213 303.3 L214 305.3 L215 305.2 L216 304.5 L217 303.1 L218 304.6 L219 305.3 L220 304.6 L221 304.7 L222 304.1 L223 305.8 L224 305.6 L225 304.5 L226 303.4 L227 304.4 L228 302.8 L229 304.5 L230 305.4 L231 304.4 L232 302.9 L233 304.1 L234 305.8 L235 304.3 L236 304.1 L237 305.7 L238 303.7 L239 304.8 L240 303.1 L241 302.7 L242 303.4 L243 303.7 L244 305.9 L245 303.0 L246 303.5 L247 304.4 L248 303.9 L249 304.4 L250 303.3 L251 304.8 L252 305.5 L253 305.5 L254 305.1 L255 305.7 L256 303.7 L257 303.3 L258 305.6 L259 303.4 L260 305.1 L261 304.0 L262 303.0 L263 303.4 L264 304.9 L265 305.9 L266 305.1 L267 304.9 L268 300.5 L269 304.4 L270 304.5 L271 303.2 L272 305.4 L273 303.5 L274 305.8 L275 305.2 L276 304.1 L277 304.0 L278 302.6 L279 305.4 L280 304.1 L281 303.9 L282 303.1 L283 302.6 L284 305.3 L285 305.5 L286 303.9 L287 304.3 L288 305.3 L289 305.7 L290 305.2 L291 304.0 L292 305.6 L293 305.2 L294 304.0 L295 302.8 L296 303.5 L297 304.8 L298 303.4 L299 304.9 L300 304.8 L301 304.4 L302 306.0 L303 305.0 L304 306.5 L305 305.1 L306 302.5 L307 302.7 L308 305.7 L309 304.4 L310 304.6 L311 304.8 L312 302.9 L313 307.4 L314 303.2 L315 303.3 L316 307.0 L317 304.1 L318 304.7 L319 303.7 L320 304.6 L321 305.2 L322 302.8 L323 302.9 L324 305.3 L325 305.8 L326 302.9 L327 308.0 L328 304.2 L329 306.1 L330 304.6 L331 305.2 L332 306.1 L333 305.5 L334 304.4 L335 303.0 L336 303.2 L337 305.1 L338 303.7 L339 304.3 L340 304.7 L341 306.1 L342 305.6 L343 305.5 L344 304.1 L345 305.2 L346 304.9 L347 305.5 L348 303.8 L349 306.0 L350 301.9 L351 304.4 L352 303.3 L353 304.1 L354 304.8 L355 304.2 L356 303.7 L357 305.5 L358 304.8 L359 305.1 L360 303.7 L361 303.9 L362 304.3 L363 306.4 L364 304.9 L365 306.2 L366 306.2 L367 303.6 L368 304.7 L369 304.1 L370 303.3 L371 304.4 L372 305.6 L373 304.1 L374 304.3 L375 305.4 L376 305.0 L377 306.2 L378 304.5 L379 304.0 L380 304.3 L381 305.9 L382 304.1 L383 304.0 L384 304.1 L385 304.7 L386 304.6 L387 304.6 L388 305.2 L389 303.7 L390 304.4 L391 305.8 L392 305.5 L393 303.1 L394 305.0 L395 302.7 L396 302.9 L397 304.6 L398 303.1 L399 304.1 L400 303.6 L401 305.5 L402 303.9 L403 304.6 L404 305.2 L405 304.9 L406 304.9 L407 304.8 L408 305.2 L409 303.7 L410 304.6 L411 303.3 L412 304.3 L413 303.1 L414 302.4 L415 302.7 L416 301.9 L417 302.0 L418 304.2 L419 301.8 L420 303.5 L421 300.0 L422 302.2 L423 303.8 L424 302.1 L425 302.3 L426 303.9 L427 303.1 L428 302.8 L429 304.2 L430 302.3 L431 304.3 L432 304.0 L433 303.7 L434 302.8 L435 301.9 L436 303.1 L437 300.9 L438 302.1 L439 303.2 L440 301.3 L441 301.8 L442 303.6 L443 302.8 L444 301.5 L445 301.0 L446 300.5 L447 303.3 L448 300.7 L449 302.7 L450 301.9 L451 302.3 L452 301.2 L453 301.6 L454 300.4 L455 300.8 L456 301.8 L457 302.8 L458 300.0 L459 301.5 L460 301.1 L461 300.2 L462 301.4 L463 302.6 L464 299.7 L465 302.1 L466 301.5 L467 299.6 L468 302.2 L469 301.6 L470 300.7 L471 300.4 L472 300.7 L473 300.2 L474 301.7 L475 302.4 L476 301.6 L477 300.1 L478 299.4 L479 301.4 L480 300.3 L481 299.6 L482 299.4 L483 302.3 L484 300.2 L485 301.0 L486 301.5 L487 299.8 L488 298.7 L489 301.0 L490 301.2 L491 299.7 L492 299.6 L493 298.8 L494 300.1 L495 301.1 L496 298.8 L497 301.3 L498 299.4 L499 298.6 L500 301.4 L501 300.5 L502 298.7 L503 300.1 L504 298.2 L505 299.8 L506 298.9 L507 299.0 L508 298.1 L509 298.1 L510 299.5 L511 299.5 L512 300.6 L513 300.3 L514 297.9" fill="none" stroke="#ff00ff" stroke-width="1.3" shape-rendering="auto"/>
</svg>
<svg class="a" style="left:0;top:0" width="743" height="449" viewBox="0 0 743 449" role="img" aria-label="日本語ラベル" font-family="&quot;Liberation Sans&quot;, &quot;Noto Sans CJK JP&quot;, sans-serif" fill="#000">
<text x="583.5" y="72.2" font-size="11.5">開始</text>
<text x="668" y="72.2" font-size="11.5">終了</text>
<text x="569.5" y="96" font-size="10" fill="#0000ff" textLength="58" lengthAdjust="spacingAndGlyphs">ディスク情報</text>
<text x="568.5" y="111.2" font-size="10" textLength="28.3" lengthAdjust="spacingAndGlyphs">タイプ:</text>
<text x="568.8" y="141.2" font-size="11.3">日付:</text>
<text x="568.5" y="198.2" font-size="12">転送速度</text>
<text x="634.3" y="198.4" font-size="11.8">最大</text>
<text x="568.5" y="222.8" font-size="11.7">開始</text>
<text x="568.5" y="245.8" font-size="12">終了位置</text>
<text x="568.5" y="360.2" font-size="10.5" textLength="51.5" lengthAdjust="spacingAndGlyphs">品質スコア:</text>
<text x="568.5" y="392.4" font-size="12" textLength="50.3" lengthAdjust="spacingAndGlyphs">進行状況:</text>
<text x="568.5" y="411" font-size="11" textLength="46.5" lengthAdjust="spacingAndGlyphs">ポジション:</text>
<text x="568.5" y="429.4" font-size="11.3">速度:</text>
<text x="26.7" y="393" font-size="11.5">平均:</text>
<text x="26.7" y="411.8" font-size="11.5">最大:</text>
<text x="26.7" y="428.9" font-size="11.2">合計</text>
<text x="54.6" y="429.2" font-size="12">:</text>
<text x="208.5" y="393" font-size="11.5">平均:</text>
<text x="208.5" y="411.8" font-size="11.5">最大:</text>
<text x="208.5" y="428.9" font-size="11.2">合計</text>
<text x="236.4" y="429.2" font-size="12">:</text>
<text x="388.9" y="393" font-size="11.5">平均:</text>
<text x="388.9" y="410.4" font-size="11.5">最大:</text>
</svg>
<span class="t" style="left:6.90px;top:9.00px;font-size:13px;line-height:13px;color:#000;transform:scaleX(0.9760);font-weight:bold;">CD</span>
<span class="t" style="left:31.00px;top:9.00px;font-size:13px;line-height:13px;color:#000;transform:scaleX(0.9744);font-weight:bold;">Speed</span>
<span class="t" style="left:76.30px;top:9.00px;font-size:13px;line-height:13px;color:#000;transform:scaleX(0.5333);font-weight:bold;">:</span>
<span class="t" style="left:84.00px;top:9.00px;font-size:13px;line-height:13px;color:#000;transform:scaleX(0.9476);font-weight:bold;">Disc</span>
<span class="t" style="left:117.00px;top:9.00px;font-size:13px;line-height:13px;color:#000;transform:scaleX(0.9872);font-weight:bold;">Quality</span>
<span class="t" style="left:167.00px;top:9.00px;font-size:13px;line-height:13px;color:#000;transform:scaleX(1.1262);font-weight:bold;">Test</span>
<span class="t" style="left:204.00px;top:9.00px;font-size:13px;line-height:13px;color:#000;transform:scaleX(1.3913);font-weight:bold;">-</span>
<span class="t" style="left:217.00px;top:9.00px;font-size:13px;line-height:13px;color:#000;transform:scaleX(0.8679);font-weight:bold;">BENQ</span>
<span class="t" style="left:272.60px;top:9.00px;font-size:13px;line-height:13px;color:#000;transform:scaleX(0.9986);font-weight:bold;">DVD</span>
<span class="t" style="left:305.60px;top:9.00px;font-size:13px;line-height:13px;color:#000;transform:scaleX(0.8960);font-weight:bold;">DD</span>
<span class="t" style="left:328.00px;top:9.00px;font-size:13px;line-height:13px;color:#000;transform:scaleX(0.9691);font-weight:bold;">DW1620</span>
<span class="t" style="left:399.80px;top:9.00px;font-size:13px;line-height:13px;color:#000;transform:scaleX(0.9600);font-weight:bold;">B7S9</span>
<span class="t" style="left:22.20px;top:39.00px;font-size:12px;line-height:12px;color:#000;transform:scaleX(0.9656);">Disc Quality</span>
<span class="t" style="left:447.80px;top:58.60px;font-size:12px;line-height:12px;color:#000;transform:scaleX(0.9436);">recorded with</span>
<span class="t" style="left:525.00px;top:58.60px;font-size:12px;line-height:12px;color:#000;transform:scaleX(0.8333);">v</span>
<span class="t" style="left:42.23px;top:67.40px;font-size:12px;line-height:12px;color:#000;transform:scaleX(0.8800);">50</span>
<span class="t" style="left:42.23px;top:94.40px;font-size:12px;line-height:12px;color:#000;transform:scaleX(0.8800);">40</span>
<span class="t" style="left:42.23px;top:120.40px;font-size:12px;line-height:12px;color:#000;transform:scaleX(0.8800);">30</span>
<span class="t" style="left:42.23px;top:146.40px;font-size:12px;line-height:12px;color:#000;transform:scaleX(0.8800);">20</span>
<span class="t" style="left:42.23px;top:172.40px;font-size:12px;line-height:12px;color:#000;transform:scaleX(0.8800);">10</span>
<span class="t" style="left:533.20px;top:182.42px;font-size:12px;line-height:12px;color:#000;transform:scaleX(0.8800);">2</span>
<span class="t" style="left:533.20px;top:166.04px;font-size:12px;line-height:12px;color:#000;transform:scaleX(0.8800);">4</span>
<span class="t" style="left:533.20px;top:149.66px;font-size:12px;line-height:12px;color:#000;transform:scaleX(0.8800);">6</span>
<span class="t" style="left:533.20px;top:133.28px;font-size:12px;line-height:12px;color:#000;transform:scaleX(0.8800);">8</span>
<span class="t" style="left:533.20px;top:116.90px;font-size:12px;line-height:12px;color:#000;transform:scaleX(0.8800);">10</span>
<span class="t" style="left:533.20px;top:100.52px;font-size:12px;line-height:12px;color:#000;transform:scaleX(0.8800);">12</span>
<span class="t" style="left:533.20px;top:84.14px;font-size:12px;line-height:12px;color:#000;transform:scaleX(0.8800);">14</span>
<span class="t" style="left:533.20px;top:67.76px;font-size:12px;line-height:12px;color:#000;transform:scaleX(0.8800);">16</span>
<span class="t" style="left:57.40px;top:206.80px;font-size:12px;line-height:12px;color:#000;transform:scaleX(0.8200);">0.0</span>
<span class="t" style="left:57.40px;top:357.20px;font-size:12px;line-height:12px;color:#000;transform:scaleX(0.8200);">0.0</span>
<span class="t" style="left:108.40px;top:206.80px;font-size:12px;line-height:12px;color:#000;transform:scaleX(0.8200);">0.5</span>
<span class="t" style="left:108.40px;top:357.20px;font-size:12px;line-height:12px;color:#000;transform:scaleX(0.8200);">0.5</span>
<span class="t" style="left:160.40px;top:206.80px;font-size:12px;line-height:12px;color:#000;transform:scaleX(0.8200);">1.0</span>
<span class="t" style="left:160.40px;top:357.20px;font-size:12px;line-height:12px;color:#000;transform:scaleX(0.8200);">1.0</span>
<span class="t" style="left:212.40px;top:206.80px;font-size:12px;line-height:12px;color:#000;transform:scaleX(0.8200);">1.5</span>
<span class="t" style="left:212.40px;top:357.20px;font-size:12px;line-height:12px;color:#000;transform:scaleX(0.8200);">1.5</span>
<span class="t" style="left:264.40px;top:206.80px;font-size:12px;line-height:12px;color:#000;transform:scaleX(0.8200);">2.0</span>
<span class="t" style="left:264.40px;top:357.20px;font-size:12px;line-height:12px;color:#000;transform:scaleX(0.8200);">2.0</span>
<span class="t" style="left:316.40px;top:206.80px;font-size:12px;line-height:12px;color:#000;transform:scaleX(0.8200);">2.5</span>
<span class="t" style="left:316.40px;top:357.20px;font-size:12px;line-height:12px;color:#000;transform:scaleX(0.8200);">2.5</span>
<span class="t" style="left:368.40px;top:206.80px;font-size:12px;line-height:12px;color:#000;transform:scaleX(0.8200);">3.0</span>
<span class="t" style="left:368.40px;top:357.20px;font-size:12px;line-height:12px;color:#000;transform:scaleX(0.8200);">3.0</span>
<span class="t" style="left:420.40px;top:206.80px;font-size:12px;line-height:12px;color:#000;transform:scaleX(0.8200);">3.5</span>
<span class="t" style="left:420.40px;top:357.20px;font-size:12px;line-height:12px;color:#000;transform:scaleX(0.8200);">3.5</span>
<span class="t" style="left:472.40px;top:206.80px;font-size:12px;line-height:12px;color:#000;transform:scaleX(0.8200);">4.0</span>
<span class="t" style="left:472.40px;top:357.20px;font-size:12px;line-height:12px;color:#000;transform:scaleX(0.8200);">4.0</span>
<span class="t" style="left:523.40px;top:206.80px;font-size:12px;line-height:12px;color:#000;transform:scaleX(0.8200);">4.5</span>
<span class="t" style="left:523.40px;top:357.20px;font-size:12px;line-height:12px;color:#000;transform:scaleX(0.8200);">4.5</span>
<span class="t" style="left:42.23px;top:217.20px;font-size:12px;line-height:12px;color:#000;transform:scaleX(0.8800);">10</span>
<span class="t" style="left:48.12px;top:244.20px;font-size:12px;line-height:12px;color:#000;transform:scaleX(0.8800);">8</span>
<span class="t" style="left:48.12px;top:270.20px;font-size:12px;line-height:12px;color:#000;transform:scaleX(0.8800);">6</span>
<span class="t" style="left:48.12px;top:296.20px;font-size:12px;line-height:12px;color:#000;transform:scaleX(0.8800);">4</span>
<span class="t" style="left:48.12px;top:322.20px;font-size:12px;line-height:12px;color:#000;transform:scaleX(0.8800);">2</span>
<span class="t" style="left:533.20px;top:217.20px;font-size:12px;line-height:12px;color:#000;transform:scaleX(0.8800);">20</span>
<span class="t" style="left:533.20px;top:244.20px;font-size:12px;line-height:12px;color:#000;transform:scaleX(0.8800);">16</span>
<span class="t" style="left:533.20px;top:270.20px;font-size:12px;line-height:12px;color:#000;transform:scaleX(0.8800);">12</span>
<span class="t" style="left:533.20px;top:296.20px;font-size:12px;line-height:12px;color:#000;transform:scaleX(0.8800);">8</span>
<span class="t" style="left:533.20px;top:322.20px;font-size:12px;line-height:12px;color:#000;transform:scaleX(0.8800);">4</span>
<span class="t" style="left:41.00px;top:368.30px;font-size:12px;line-height:12px;color:#000;transform:scaleX(0.9089);">PI Errors</span>
<span class="t" style="left:221.00px;top:368.30px;font-size:12px;line-height:12px;color:#000;transform:scaleX(0.9237);">PI Failures</span>
<span class="t" style="left:401.70px;top:368.30px;font-size:12px;line-height:12px;color:#000;transform:scaleX(0.9846);">Jitter</span>
<span class="t" style="left:155.43px;top:383.20px;font-size:12px;line-height:12px;color:#000080;transform:scaleX(0.8800);">4.33</span>
<span class="t" style="left:164.23px;top:401.60px;font-size:12px;line-height:12px;color:#000080;transform:scaleX(0.8800);">50</span>
<span class="t" style="left:146.63px;top:419.20px;font-size:12px;line-height:12px;color:#000080;transform:scaleX(0.8800);">49337</span>
<span class="t" style="left:336.25px;top:383.20px;font-size:12px;line-height:12px;color:#000080;transform:scaleX(0.8800);">0.11</span>
<span class="t" style="left:350.12px;top:401.60px;font-size:12px;line-height:12px;color:#000080;transform:scaleX(0.8800);">7</span>
<span class="t" style="left:332.51px;top:419.20px;font-size:12px;line-height:12px;color:#000080;transform:scaleX(0.8800);">1377</span>
<span class="t" style="left:506.06px;top:383.20px;font-size:12px;line-height:12px;color:#000080;transform:scaleX(0.8600);">7.47 %</span>
<span class="t" style="left:506.06px;top:400.60px;font-size:12px;line-height:12px;color:#000080;transform:scaleX(0.8600);">10.9 %</span>
<span class="t" style="left:389.80px;top:423.20px;font-size:12px;line-height:12px;color:#000;transform:scaleX(0.9027);">PO Failures:</span>
<span class="t" style="left:531.82px;top:423.20px;font-size:12px;line-height:12px;color:#000080;transform:scaleX(0.8800);">0</span>
<span class="t" style="left:617.20px;top:101.00px;font-size:12px;line-height:12px;color:#000080;transform:scaleX(0.9947);">DVD-R</span>
<span class="t" style="left:617.60px;top:116.00px;font-size:12px;line-height:12px;color:#000080;transform:scaleX(0.9031);">INFODISC-R01</span>
<span class="t" style="left:617.20px;top:131.00px;font-size:12px;line-height:12px;color:#000080;transform:scaleX(0.9334);">3 February 2005</span>
<span class="t" style="left:617.20px;top:146.20px;font-size:12px;line-height:12px;color:#000080;transform:scaleX(0.8631);">CDS_TEST_B2</span>
<span class="t" style="left:569.00px;top:116.00px;font-size:12px;line-height:12px;color:#000;transform:scaleX(0.7837);">ID:</span>
<span class="t" style="left:568.90px;top:146.20px;font-size:12px;line-height:12px;color:#000;transform:scaleX(0.8535);">Label:</span>
<span class="t" style="left:569.80px;top:168.20px;font-size:12px;line-height:12px;color:#0000ff;transform:scaleX(0.9683);">Settings</span>
<span class="t" style="left:633.80px;top:212.40px;font-size:12px;line-height:12px;color:#000;transform:scaleX(0.9333);">0000 MB</span>
<span class="t" style="left:633.80px;top:234.60px;font-size:12px;line-height:12px;color:#000;transform:scaleX(0.9333);">4488 MB</span>
<span class="t" style="left:585.20px;top:255.90px;font-size:12px;line-height:12px;color:#000;transform:scaleX(0.9331);">Show C1/PIE</span>
<span class="t" style="left:585.20px;top:272.90px;font-size:12px;line-height:12px;color:#000;transform:scaleX(0.9337);">Show C2/PIF</span>
<span class="t" style="left:585.20px;top:288.90px;font-size:12px;line-height:12px;color:#000;transform:scaleX(0.9684);">Show Jitter</span>
<span class="t" style="left:585.20px;top:305.90px;font-size:12px;line-height:12px;color:#000;transform:scaleX(0.9124);">Show Read Speed</span>
<span class="t" style="left:585.20px;top:321.90px;font-size:12px;line-height:12px;color:#000;transform:scaleX(0.9205);">Show Write Speed</span>
<span class="t" style="left:694.63px;top:350.20px;font-size:12px;line-height:12px;color:#000080;transform:scaleX(0.8800);">96</span>
<span class="t" style="left:678.76px;top:382.60px;font-size:12px;line-height:12px;color:#000080;transform:scaleX(0.8600);">100 %</span>
<span class="t" style="left:663.40px;top:401.00px;font-size:12px;line-height:12px;color:#000080;transform:scaleX(0.9000);">4487 MB</span>
<span class="t" style="left:676.98px;top:419.20px;font-size:12px;line-height:12px;color:#000080;transform:scaleX(0.9000);">8.40 X</span>
<span class="t" style="left:693.80px;top:62.80px;font-size:12px;line-height:12px;color:#000;transform:scaleX(0.7625);">(X)</span>
</body></html>
